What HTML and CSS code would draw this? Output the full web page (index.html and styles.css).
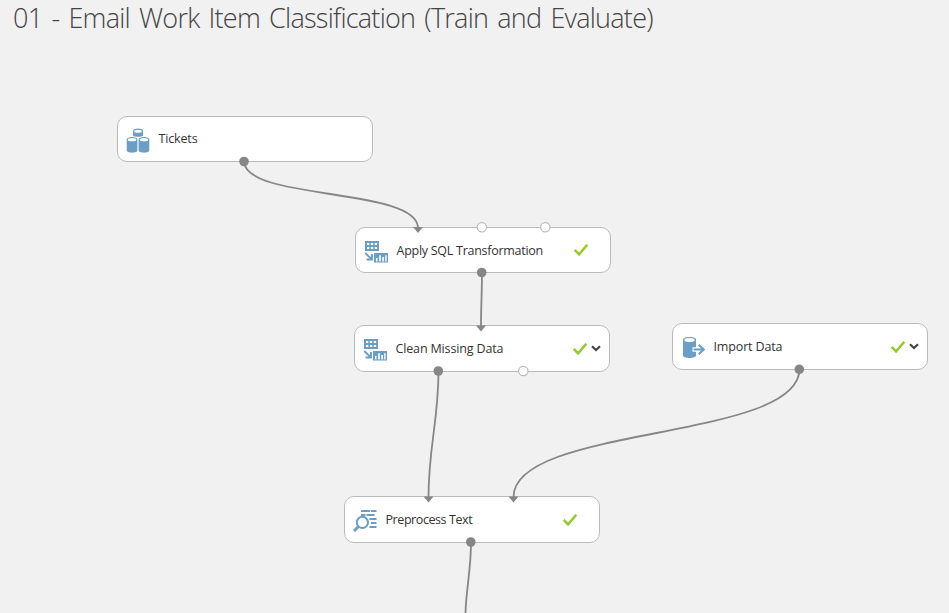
FILE: index.html
```html
<!DOCTYPE html>
<html lang="en">
<head>
<meta charset="utf-8">
<title>Email Work Item Classification</title>
<link rel="stylesheet" href="styles.css">
</head>
<body>
<svg width="0" height="0" class="defs" aria-hidden="true">
  <symbol id="cylinder" viewBox="0 0 12 14" preserveAspectRatio="none">
    <path d="M0.3 2.6C0.3 -.6 11.7 -.6 11.7 2.6V11.8C11.7 14.7 .3 14.7 .3 11.8Z" fill="#6b9ec4"/>
    <ellipse cx="6" cy="2.5" rx="4.4" ry="1.5" fill="#fff"/>
  </symbol>
  <symbol id="dataset" viewBox="0 0 24 26">
    <path d="M7 2.800C7 -.4 17 -.4 17 2.800V8C15 9 9 9 7 8Z" fill="#6b9ec4"/>
    <ellipse cx="12" cy="3.200" rx="3.900" ry="1.500" fill="#fff"/>
    <use href="#cylinder" x="0.3" y="8.800" width="11.500" height="16"/>
    <use href="#cylinder" x="12.200" y="8.800" width="11.500" height="16"/>
  </symbol>
  <symbol id="transform" viewBox="0 0 24 24">
    <path d="M1 1H15V11H1Z" fill="#6b9ec4"/>
    <path d="M3 3h2.3v2H3zM6.9 3h2.3v2H6.9zM10.8 3h2.3v2h-2.3zM3 7h2.3v2H3zM6.9 7h2.3v2H6.9zM10.8 7h2.3v2h-2.3z" fill="#fff"/>
    <path d="M1.2 13L7.5 19M8 14V19.5H2.5" fill="none" stroke="#6b9ec4" stroke-width="1.9"/>
    <path d="M10 13H24V22.5H10Z" fill="#6b9ec4"/>
    <path d="M12 18h1.5v3.5H12zM15.2 15.2h1.6v6.3h-1.6zM18.3 17h1.6v4.5h-1.6zM21.2 15.2h1.4v6.3h-1.4z" fill="#fff"/>
  </symbol>
  <symbol id="import" viewBox="0 0 24 24">
    <path d="M2 3.500C2 .1 15 .1 15 3.500V19.5C15 22.8 2 22.8 2 19.5Z" fill="#6b9ec4"/>
    <ellipse cx="8.500" cy="4" rx="5.200" ry="2" fill="#fff"/>
    <path d="M11.500 13.5H22M17.500 8.8L22.500 13.5L17.500 18.2" fill="none" stroke="#fff" stroke-width="4.5"/>
    <path d="M12.500 13.5H22M17.700 8.8L22.700 13.5L17.700 18.2" fill="none" stroke="#6b9ec4" stroke-width="2"/>
  </symbol>
  <symbol id="textsearch" viewBox="0 0 24 24">
    <path d="M8 2h9M18 2H23.500M8 6h4.500M13.5 6H21.500M16.5 10H23.500M18 14H23.500M16.5 18H23.500" fill="none" stroke="#6b9ec4" stroke-width="2"/>
    <circle cx="9.4" cy="13.4" r="5.6" fill="#fff" stroke="#6b9ec4" stroke-width="2"/>
    <path d="M5.2 17.8L1 22" stroke="#6b9ec4" stroke-width="3"/>
  </symbol>
  <symbol id="check" viewBox="0 0 16 14">
    <path d="M1.7 6.8L6.1 11.3L14.3 1.8" fill="none" stroke="#93cc27" stroke-width="2.5"/>
  </symbol>
  <symbol id="chevron" viewBox="0 0 10 7">
    <path d="M1 1.3L5 5L9 1.3" fill="none" stroke="#43434b" stroke-width="2.2"/>
  </symbol>
</svg>

<main class="canvas">
  <h1 class="title">01 - Email Work Item Classification (Train and Evaluate)</h1>

  <section class="node tickets">
    <svg class="icon"><use href="#dataset"/></svg><span class="label">Tickets</span>
  </section>
  <section class="node sql">
    <svg class="icon"><use href="#transform"/></svg><span class="label">Apply SQL Transformation</span>
    <svg class="check"><use href="#check"/></svg><span class="slot"></span>
  </section>
  <section class="node clean">
    <svg class="icon"><use href="#transform"/></svg><span class="label">Clean Missing Data</span>
    <svg class="check"><use href="#check"/></svg><span class="slot"><svg class="chevron"><use href="#chevron"/></svg></span>
  </section>
  <section class="node import">
    <svg class="icon"><use href="#import"/></svg><span class="label">Import Data</span>
    <svg class="check"><use href="#check"/></svg><span class="slot"><svg class="chevron"><use href="#chevron"/></svg></span>
  </section>
  <section class="node preprocess">
    <svg class="icon"><use href="#textsearch"/></svg><span class="label">Preprocess Text</span>
    <svg class="check"><use href="#check"/></svg><span class="slot"></span>
  </section>

  <svg class="links" viewBox="0 0 949 613">
    <g class="wires">
      <path d="M244 161C244 201 418 187 418 228"/>
      <path d="M482 272C482 292 481 306 481 326"/>
      <path d="M438.500 371C438.500 421 428.500 447 428.500 497"/>
      <path d="M799.500 369C799.500 441 513.500 425 513.500 497"/>
      <path d="M471 542C471 570 466 590 465.500 613"/>
    </g>
    <g class="arrows">
      <path d="M413 227h10l-5 6z"/>
      <path d="M476 325.500h10l-5 6z"/>
      <path d="M423.500 496.500h10l-5 6z"/>
      <path d="M508.500 496.500h10l-5 6z"/>
    </g>
    <g class="outputs">
      <circle cx="244" cy="161.500" r="4.800"/>
      <circle cx="481.700" cy="272.500" r="4.800"/>
      <circle cx="438.300" cy="371" r="4.800"/>
      <circle cx="799.300" cy="369.300" r="4.800"/>
      <circle cx="470.800" cy="542" r="4.800"/>
    </g>
    <g class="open">
      <circle cx="481.800" cy="227.300" r="4.700"/>
      <circle cx="545.300" cy="227.300" r="4.700"/>
      <circle cx="523.300" cy="371" r="4.700"/>
    </g>
  </svg>
</main>
</body>
</html>
```

FILE: styles.css
```css
body {
  margin: 0;
  background: #f1f1f1;
  font-family: "Open Sans", "Noto Sans", sans-serif;
}
.defs { position: absolute; }
.canvas {
  position: relative;
  height: 613px;
  overflow: hidden;
}
.title {
  margin: 0;
  padding-left: 13px;
  font-size: 27px;
  line-height: 36px;
  font-weight: 300;
  letter-spacing: -0.75px;
  word-spacing: 2.800px;
  color: #444;
  white-space: nowrap;
}
.node {
  position: absolute;
  display: flex;
  align-items: center;
  box-sizing: border-box;
  width: 256px;
  height: 46px;
  padding: 0 7px 0 8px;
  border: 1px solid #bbb;
  border-radius: 10px;
  background: #fff;
}
.tickets { left: 117px; top: 116px; }
.sql { left: 355px; top: 227px; }
.clean { left: 354px; top: 325px; height: 47px; }
.import { left: 672px; top: 323px; height: 47px; }
.preprocess { left: 344px; top: 496px; height: 47px; }
.icon {
  flex: none;
  width: 24px;
  height: 24px;
  margin: 2px 8.500px 0 0;
}
.tickets .icon { height: 26px; margin-top: 4px; }
.sql .icon { margin-top: 4px; }
.label {
  flex: 1;
  font-size: 12.500px;
  line-height: 18px;
  letter-spacing: -0.15px;
  color: #333;
  white-space: nowrap;
}
.sql .label { padding-top: 1px; letter-spacing: -0.27px; }
.preprocess .label { letter-spacing: -0.42px; }
.check {
  width: 16px;
  height: 14px;
}
.slot {
  display: flex;
  align-items: center;
  width: 14px;
  height: 14px;
}
.chevron {
  width: 10px;
  height: 7px;
  margin-left: 3px;
}
.sql, .clean { width: 255.500px; }
.links {
  position: absolute;
  left: 0;
  top: 0;
  width: 949px;
  height: 613px;
}
.wires { fill: none; stroke: #868686; stroke-width: 1.800; }
.arrows, .outputs { fill: #868686; }
.open { fill: #fff; stroke: #bbb; stroke-width: 1.200; }
```
